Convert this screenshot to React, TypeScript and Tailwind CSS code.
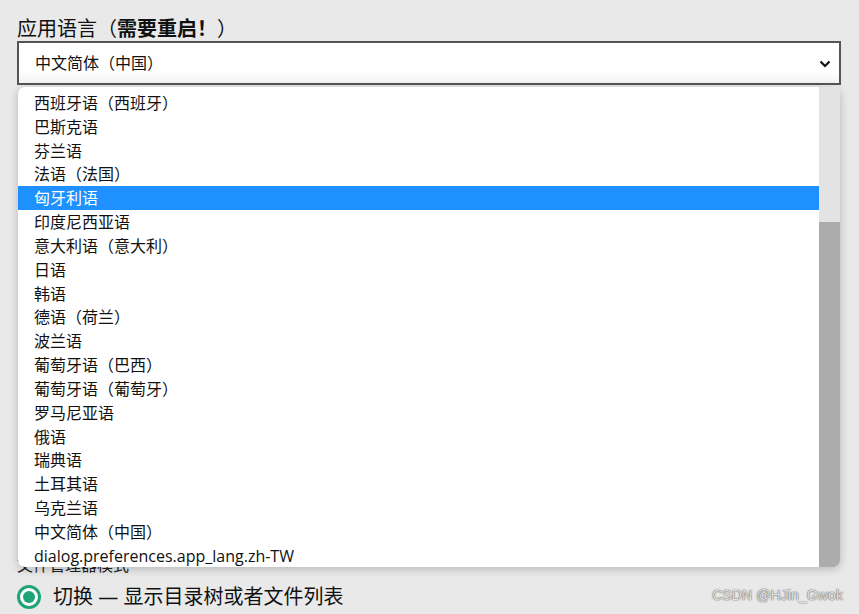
const languages = [
  '西班牙语（西班牙）',
  '巴斯克语',
  '芬兰语',
  '法语（法国）',
  '匈牙利语',
  '印度尼西亚语',
  '意大利语（意大利）',
  '日语',
  '韩语',
  '德语（荷兰）',
  '波兰语',
  '葡萄牙语（巴西）',
  '葡萄牙语（葡萄牙）',
  '罗马尼亚语',
  '俄语',
  '瑞典语',
  '土耳其语',
  '乌克兰语',
  '中文简体（中国）',
  'dialog.preferences.app_lang.zh-TW',
];

const font = "font-['Open_Sans','Noto_Sans_CJK_SC',sans-serif]";

export default function App() {
  return (
    <div className={`relative h-[614px] w-[859px] overflow-hidden bg-[#e9e9e9] px-[17px] pt-[17px] text-[#111] ${font}`}>
      <div className="text-[20px] leading-[24px]">
        应用语言（<span className="font-bold">需要重启！</span>）
      </div>
      <div className="flex h-[44px] w-[824px] items-center justify-between border-2 border-[#555] bg-gradient-to-b from-white from-70% to-[#f3f3f3] pl-[16px] pr-[8px] text-[16px]">
        <span>中文简体（中国）</span>
        <svg width="12" height="8" viewBox="0 0 12 8" className="mt-[1px]">
          <path d="M1.5 1.5l4.5 4.5 4.5-4.5" fill="none" stroke="#111" strokeWidth="2.2" />
        </svg>
      </div>

      {/* settings hidden under the open list */}
      <div className="mt-[470px] text-[16px] leading-[20px] text-[#222]">文件管理器模式</div>
      <div className="mt-[10px] flex items-center gap-[12px]">
        <span className="flex h-[24px] w-[24px] items-center justify-center rounded-full border-[3px] border-[#1fa477] bg-white">
          <span className="h-[12px] w-[12px] rounded-full bg-[#1fa477]" />
        </span>
        <span className="text-[20px] leading-[24px]">切换 — 显示目录树或者文件列表</span>
      </div>

      <div className="absolute bottom-[8px] right-[16px] font-['Liberation_Sans',sans-serif] text-[14px] tracking-[0.1px] text-[#e2e2e2] [text-shadow:0_0_1.5px_#555,0_0_1px_#777]">
        CSDN @HJin_Gwok
      </div>

      {/* open dropdown list */}
      <div className="absolute left-[18px] top-[87px] flex h-[480px] w-[822px] overflow-hidden rounded-[7px] bg-white shadow-[0_2px_10px_rgba(0,0,0,0.22)]">
        <ul className="flex-1 pt-[4px] text-[16px] leading-[24px]">
          {languages.map((l) => (
            <li
              key={l}
              className={`h-[23.84px] pl-[16px] ${l === '匈牙利语' ? 'bg-[#1e90ff] text-white' : 'text-[#111]'}`}
            >
              {l}
            </li>
          ))}
        </ul>
        <div className="flex w-[21px] flex-col bg-[#e3e3e3]">
          <div className="mt-[135px] flex-1 bg-[#acacac]" />
        </div>
      </div>
    </div>
  );
}
